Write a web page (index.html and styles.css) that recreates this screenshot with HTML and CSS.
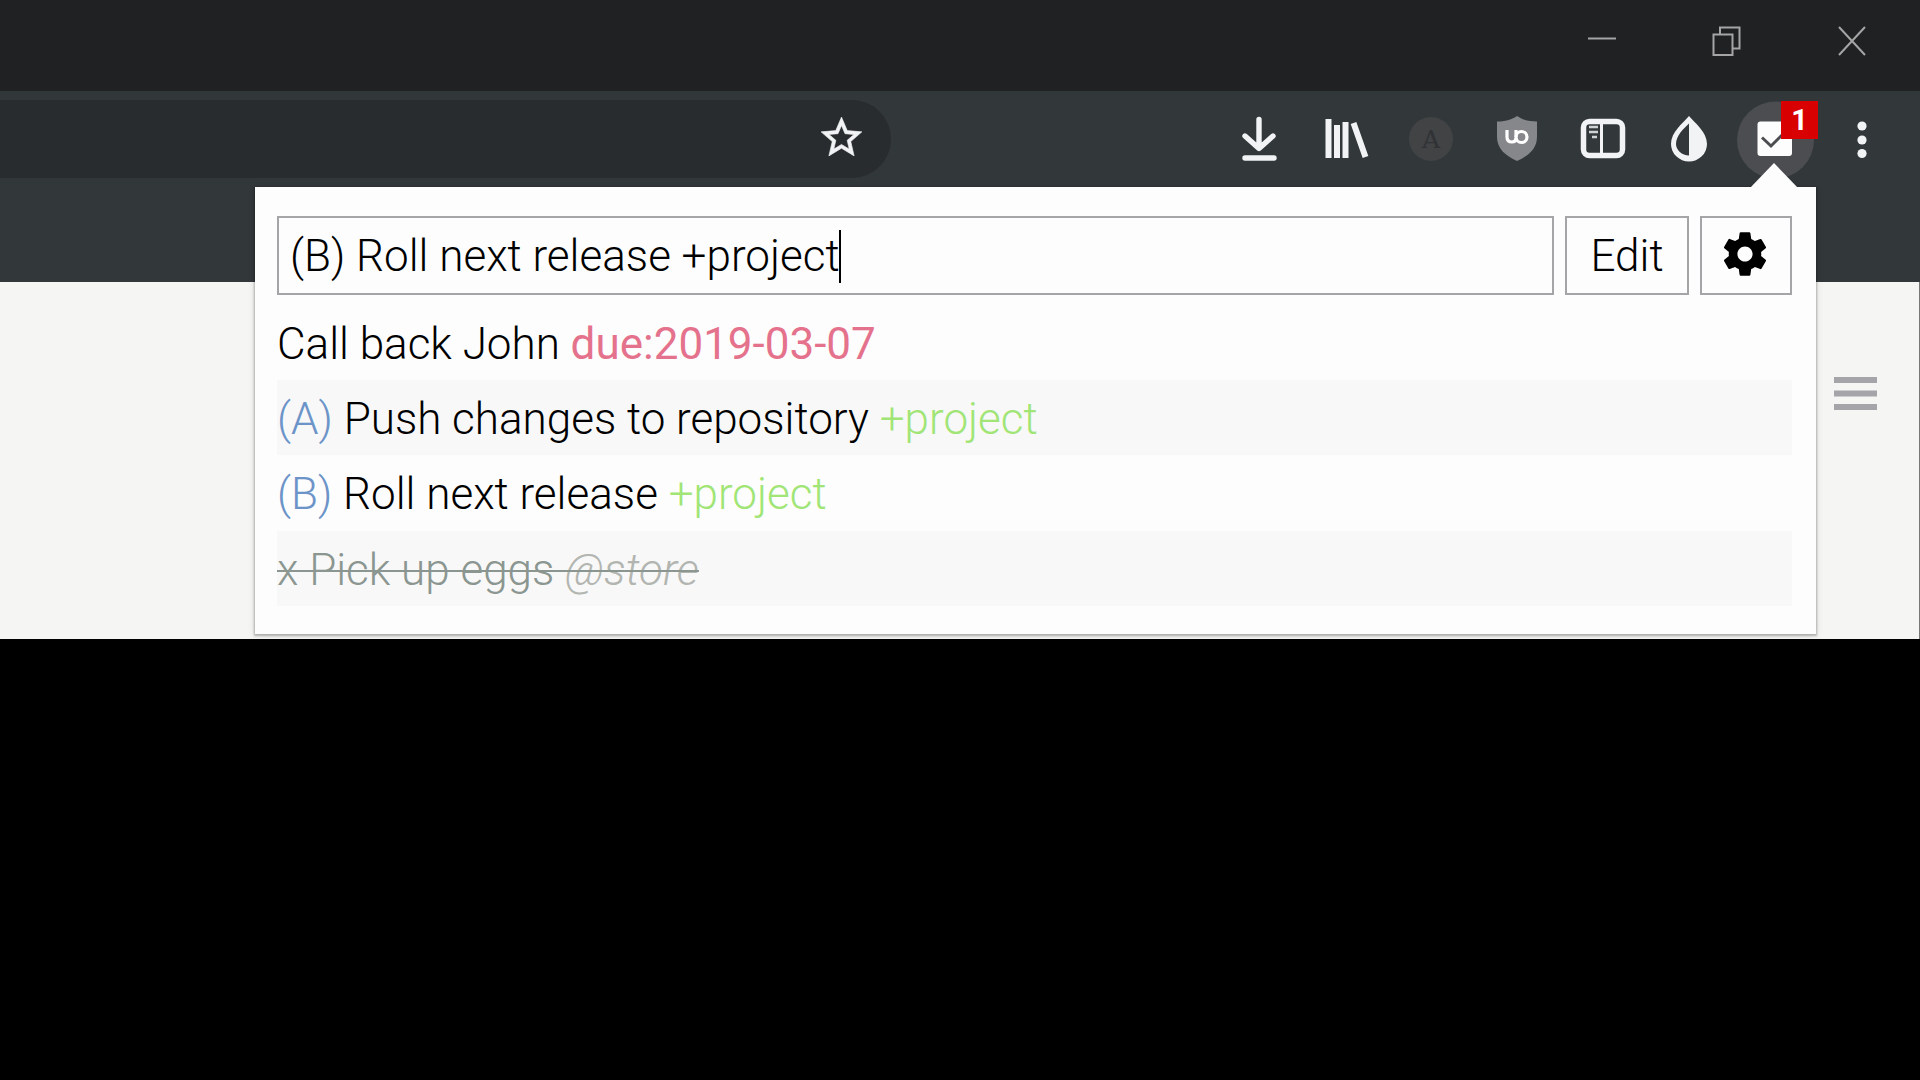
FILE: index.html
```html
<!DOCTYPE html>
<html lang="en">
<head>
<meta charset="utf-8">
<title>Todo</title>
<link rel="stylesheet" href="styles.css">
</head>
<body>
<div class="window">
  <header class="titlebar">
    <svg class="control" viewBox="0 0 30 30"><path d="M1 12.5H29"/></svg>
    <svg class="control" viewBox="0 0 30 30"><path d="M1.500 8.5H20.500V29H1.500zM8 8V1.500H27.500V22.500H20.500"/></svg>
    <svg class="control" viewBox="0 0 30 30"><path d="M2 1L28 29M28 1L2 29"/></svg>
  </header>
  <div class="toolbar">
    <div class="omnibox">
      <svg class="star" viewBox="0 0 24 24"><path d="M22 9.24l-7.19-.62L12 2 9.19 8.63 2 9.24l5.46 4.73L5.82 21 12 17.27 18.18 21l-1.63-7.03L22 9.24zM12 15.4l-3.76 2.27 1-4.28-3.32-2.88 4.38-.38L12 6.100l1.710 4.040 4.380.380-3.320 2.880 1 4.280L12 15.400z"/></svg>
    </div>
    <nav class="extensions">
      <svg class="ext" viewBox="0 0 86 86"><path class="line round" d="M43 23.500V51M29 40L43 52.500L57 40M29 62H58"/></svg>
      <svg class="ext" viewBox="0 0 86 86"><path class="line" d="M26.500 23V62M35 29V62M43.500 26V62M51.500 27L63.500 61"/></svg>
      <svg class="ext" viewBox="0 0 86 86"><circle cx="43" cy="43" r="22" fill="#414345"/><text class="letter" x="43" y="51.500">A</text></svg>
      <svg class="ext" viewBox="0 0 86 86"><path fill="#85878a" d="M43 20C37 24 31 25.500 23 25.500V41C23 53 32 60 43 65C54 60 63 53 63 41V25.500C55 25.500 49 24 43 20z"/><path class="thin" d="M33 34V41C33 44.500 35 46 38 46C41 46 42 44 42 42"/><circle class="thin" cx="47.500" cy="41" r="5.500"/><path class="thin" d="M42 34V41"/></svg>
      <svg class="ext" viewBox="0 0 86 86"><rect class="frame" x="23.500" y="25.500" width="39" height="34" rx="6"/><path fill="#f1f3f4" d="M40 27h3v32h-3z"/><path class="dash" d="M29 31h9M29 36h9M32 41h5"/></svg>
      <svg class="ext" viewBox="0 0 86 86"><path fill="#f1f3f4" fill-rule="evenodd" d="M43 20C49 27 61 36 61 48A18 17.500 0 0 1 25 48C25 36 37 27 43 20zM43 27.500C37 33 30 40 30 48C30 54 36 59.500 43 59.500z"/></svg>
      <div class="ext active">
        <svg class="check" viewBox="0 0 86 86"><circle cx="43.500" cy="44" r="38.500" fill="#4b4d51"/><rect x="25.500" y="25.500" width="34.500" height="34.500" rx="3" fill="#fdfdfd"/><path d="M30 41.500L39 50L55 34" fill="none" stroke="#4b4d51" stroke-width="3"/></svg>
        <span class="badge">1</span>
      </div>
      <svg class="ext" viewBox="0 0 86 86"><g fill="#f1f3f4"><circle cx="44" cy="30" r="4.600"/><circle cx="44" cy="44" r="4.600"/><circle cx="44" cy="57.500" r="4.600"/></g></svg>
    </nav>
  </div>
  <main class="page">
    <svg class="menu" viewBox="0 0 43 34"><path d="M0 0h43v6H0zM0 13.500h43v6H0zM0 27h43v6H0z"/></svg>
  </main>
  <section class="popup">
    <svg class="pointer" viewBox="0 0 48 25"><path d="M0 25L24 0L48 25z"/></svg>
    <div class="form">
      <div class="field">(B) Roll next release +project<i class="caret"></i></div>
      <button class="button edit">Edit</button>
      <button class="button settings"><svg class="gear" viewBox="0 0 24 24"><path d="M19.430 12.980c.040-.320.070-.640.070-.980s-.030-.660-.070-.980l2.110-1.650c.190-.150.240-.420.120-.640l-2-3.460c-.120-.220-.390-.300-.610-.220l-2.490 1c-.520-.400-1.080-.730-1.690-.980l-.380-2.650C14.460 2.180 14.250 2 14 2h-4c-.250 0-.460.180-.490.420l-.380 2.650c-.610.250-1.170.590-1.690.980l-2.490-1c-.230-.090-.490 0-.610.220l-2 3.460c-.130.220-.070.490.120.640l2.110 1.650c-.040.320-.070.650-.070.980s.030.660.070.980l-2.110 1.650c-.190.150-.240.420-.120.640l2 3.460c.120.220.390.300.610.220l2.490-1c.520.400 1.080.730 1.690.980l.380 2.650c.030.240.240.420.490.420h4c.250 0 .460-.180.490-.420l.380-2.650c.610-.250 1.170-.590 1.690-.980l2.490 1c.230.090.490 0 .610-.220l2-3.460c.120-.220.070-.490-.120-.640l-2.110-1.650zM12 15.500c-1.930 0-3.500-1.570-3.500-3.500s1.570-3.500 3.500-3.500 3.500 1.570 3.500 3.500-1.570 3.500-3.500 3.500z"/></svg></button>
    </div>
    <ul class="tasks">
      <li>Call back John <span class="due">due:2019-03-07</span></li>
      <li><span class="priority">(A)</span> Push changes to repository <span class="project">+project</span></li>
      <li><span class="priority">(B)</span> Roll next release <span class="project">+project</span></li>
      <li><s class="done">x Pick up eggs <em class="context">@store</em></s></li>
    </ul>
  </section>
</div>
</body>
</html>
```
FILE: styles.css
```css
* { box-sizing: border-box; }
body { margin: 0; background: #000; font-family: Roboto, sans-serif; font-weight: 300; }
svg { display: block; flex: none; }
.window { position: relative; display: flex; flex-direction: column; width: 1920px; height: 639px; overflow: hidden; background: #f5f5f3; }
.titlebar { display: flex; justify-content: flex-end; gap: 95px; height: 91px; padding: 26px 53px 0 0; background: #1f2123; }
.control { width: 30px; height: 30px; fill: none; stroke: #a5a5a5; stroke-width: 2; }
.toolbar { display: flex; justify-content: space-between; height: 191px; padding: 9px 16px 0 0; background: #32373a; }
.omnibox { display: flex; justify-content: flex-end; width: 891px; height: 78px; padding: 13px 25px 0 0; background: #282c2f; border-radius: 0 39px 39px 0; }
.star { width: 49px; height: 49px; fill: #f1f3f4; stroke: #f1f3f4; stroke-width: .3; }
.extensions { display: flex; margin-top: -4px; }
.ext { flex: none; width: 86px; height: 86px; }
.line { fill: none; stroke: #f1f3f4; stroke-width: 6; }
.round { stroke-width: 5.4; stroke-linecap: round; stroke-linejoin: round; }
.thin { fill: none; stroke: #fff; stroke-width: 3.2; }
.frame { fill: none; stroke: #f1f3f4; stroke-width: 5.5; }
.dash { stroke: #d0d1d2; stroke-width: 2.5; }
.letter { font: 25px "DejaVu Serif", serif; fill: #303235; text-anchor: middle; }
.active { position: relative; }
.check { width: 86px; height: 86px; }
.badge { position: absolute; left: 49px; top: 5px; width: 37px; height: 38px; background: #d80000; color: #fff; font-size: 29px; font-weight: 700; line-height: 38px; text-align: center; }
.page { display: flex; justify-content: flex-end; flex: 1; padding: 95px 42px 0 0; border-right: 1px solid #777; }
.menu { width: 43px; height: 34px; fill: #a4a4a9; }
.popup { position: absolute; left: 255px; top: 187px; width: 1561px; height: 447px; padding: 29px 24px 0 22px; background: #fdfdfd; box-shadow: 0 1px 2px 1px rgba(0,0,0,.25), 0 1px 8px rgba(0,0,0,.1); font-size: 44px; color: #000; }
.pointer { position: absolute; left: 1495px; top: -24px; width: 48px; height: 25px; fill: #fdfdfd; }
.form { display: flex; gap: 11px; height: 79px; margin-bottom: 10px; }
.field, .button { border: 2px solid #a5a5a8; background: #fdfdfd; }
.field { display: flex; align-items: center; flex: 1; padding: 1px 0 0 11px; white-space: pre; }
.caret { width: 2px; height: 53px; margin-left: -1px; background: #000; }
.button { padding: 1px 0 0; font: inherit; color: #000; }
.edit { width: 124px; }
.settings { display: flex; align-items: center; justify-content: center; width: 92px; padding: 0 2px 3px 0; }
.gear { width: 52px; height: 52px; }
.tasks { margin: 0; padding: 0; list-style: none; }
.tasks li { height: 75.2px; line-height: 79px; white-space: pre; }
.tasks li:nth-child(even) { background: #f8f8f8; }
.due { color: #e5728c; font-weight: 400; }
.priority { color: #6c94c8; }
.project { color: #a0e575; }
.done { color: #8b9691; text-decoration-thickness: 2px; }
.context { color: #b2b5b0; }
```
